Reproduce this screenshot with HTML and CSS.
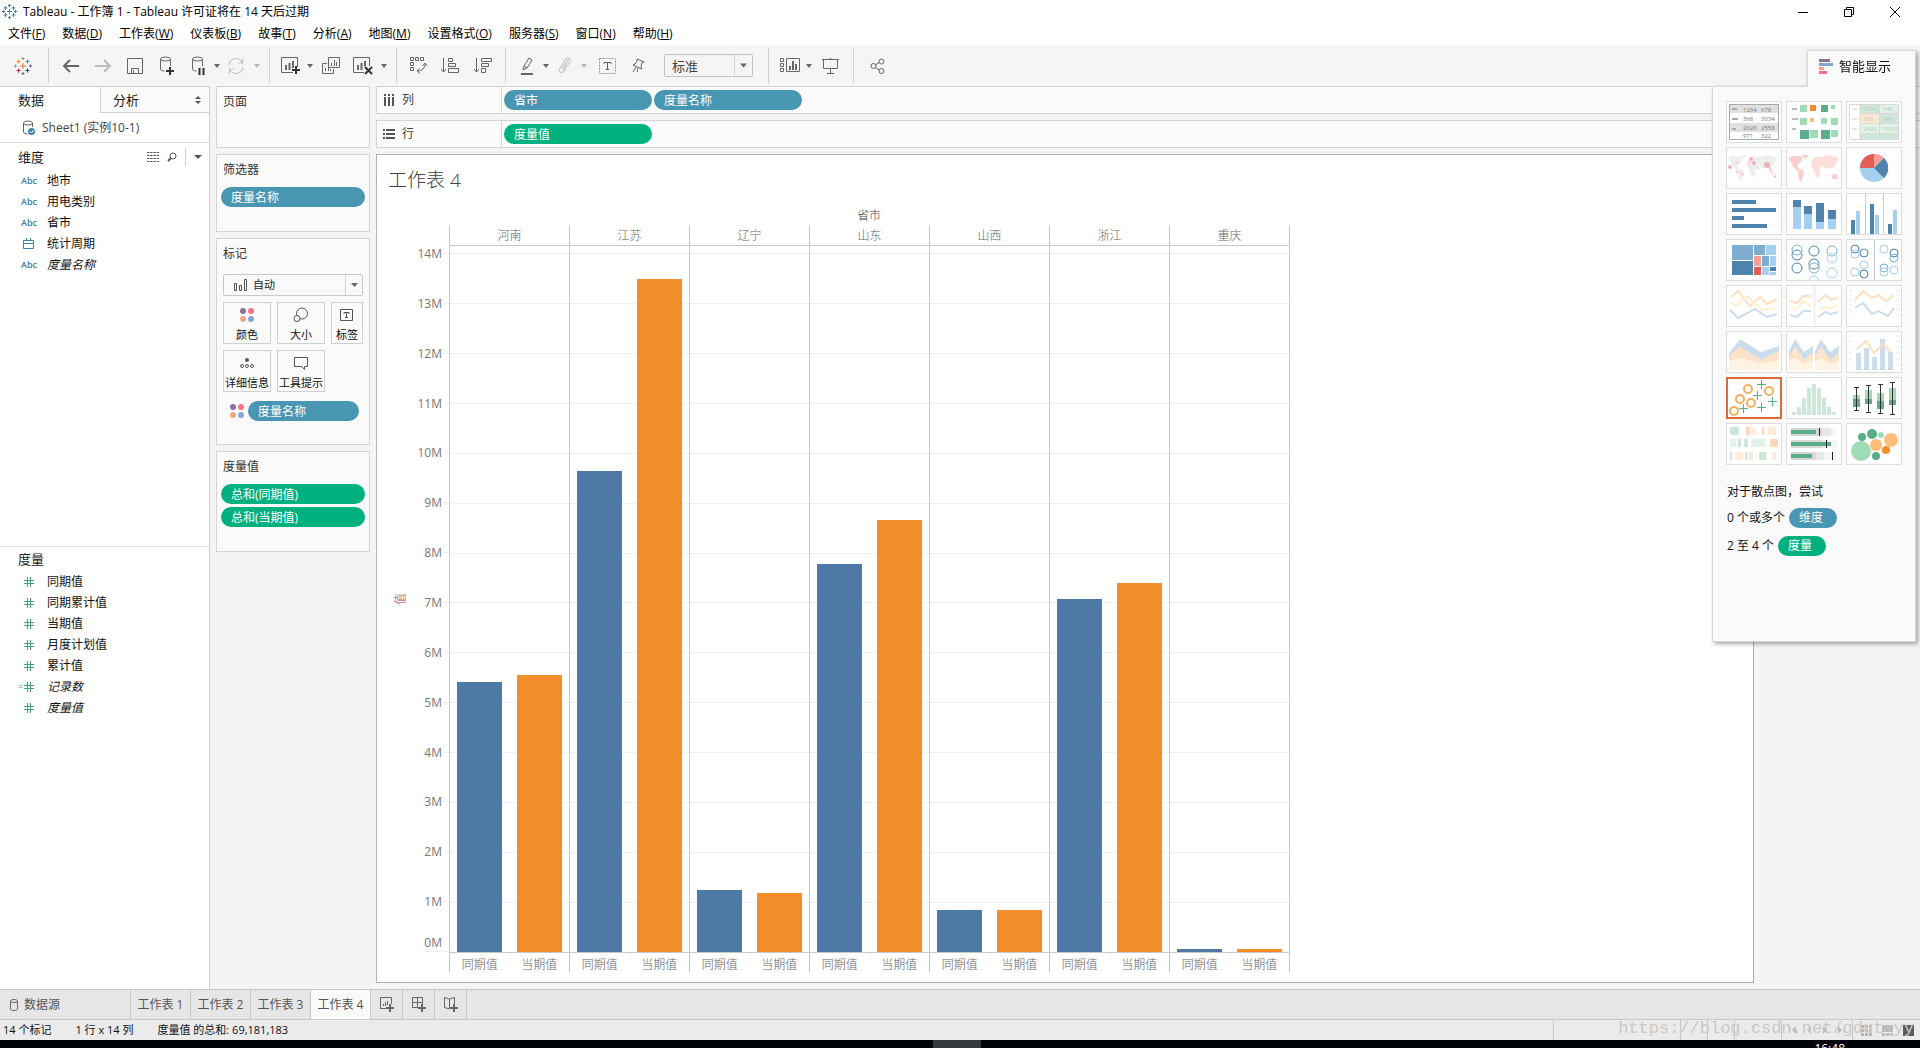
FILE: index.html
```html
<!DOCTYPE html>
<html lang="zh-CN">
<head>
<meta charset="utf-8">
<title>Tableau - 工作簿 1</title>
<link rel="stylesheet" href="styles.css">
</head>
<body>
<svg class="defs" width="0" height="0" aria-hidden="true">
  <symbol id="caret" viewBox="0 0 6 4"><path d="M0 0h6L3 4z" fill="currentColor"/></symbol>
  <symbol id="hash" viewBox="0 0 12 12"><path d="M4.500 1v10M7.500 1v10M1 4.500h10M1 7.500h10" stroke="#3fa57c" fill="none"/></symbol>
  <symbol id="dots" viewBox="0 0 16 16"><circle cx="4" cy="4" r="3" fill="#8a7399"/><circle cx="12" cy="4" r="3" fill="#fa7183"/><circle cx="4" cy="12" r="3" fill="#f3a77e"/><circle cx="12" cy="12" r="3" fill="#86a7cb"/></symbol>
</svg>

<header class="titlebar">
  <svg class="app-logo" width="15" height="15" viewBox="0 0 15 15"><path d="M7.500 5v5M5 7.500h5M3.500 2v4M1.500 4h4M11.500 2v4M9.500 4h4M3.500 9v4M1.500 11h4M11.500 9v4M9.500 11h4M7.500 0v3M6 1.500h3M7.500 12v3M6 13.500h3M1.500 6v3M0 7.500h3M13.500 6v3M12 7.500h3" stroke="#3a87ad" fill="none"/></svg>
  <h1>Tableau - 工作簿 1 - Tableau 许可证将在 14 天后过期</h1>
  <div class="window-buttons">
    <button aria-label="最小化"><svg width="12" height="12"><path d="M1 6.500h10" stroke="#000"/></svg></button>
    <button aria-label="还原"><svg width="12" height="12"><path d="M1.500 3.500h7v7h-7zM3.500 3.500v-2h7v7h-2" stroke="#000" fill="none"/></svg></button>
    <button aria-label="关闭"><svg width="12" height="12"><path d="M1 1l10 10M11 1L1 11" stroke="#000"/></svg></button>
  </div>
</header>

<nav class="menubar">
  <button>文件(<u>F</u>)</button><button>数据(<u>D</u>)</button><button>工作表(<u>W</u>)</button><button>仪表板(<u>B</u>)</button><button>故事(<u>T</u>)</button><button>分析(<u>A</u>)</button><button>地图(<u>M</u>)</button><button>设置格式(<u>O</u>)</button><button>服务器(<u>S</u>)</button><button>窗口(<u>N</u>)</button><button>帮助(<u>H</u>)</button>
</nav>

<div class="toolbar">
  <button class="tool logo" aria-label="开始"><svg width="18" height="18" viewBox="0 0 18 18" fill="none"><path d="M9 6v6M6 9h6" stroke="#e8762c"/><path d="M4.500 2.500v4M2.500 4.500h4" stroke="#eb9129"/><path d="M13.500 2.500v4M11.500 4.500h4" stroke="#59879b"/><path d="M4.500 11.500v4M2.500 13.500h4" stroke="#c72037"/><path d="M13.500 11.500v4M11.500 13.500h4" stroke="#1f447e"/><path d="M9 0v3M7.500 1.500h3" stroke="#7099a6"/><path d="M9 15v3M7.500 16.500h3" stroke="#5b6591"/><path d="M1.500 7.500v3M0 9h3" stroke="#7099a6"/><path d="M16.500 7.500v3M15 9h3" stroke="#5b6591"/></svg></button>
  <span class="sep"></span>
  <button class="tool t32" aria-label="撤消"><svg width="18" height="14" viewBox="0 0 18 14"><path d="M17 7H2M8 1L2 7l6 6" class="thick"/></svg></button>
  <button class="tool t32 off" aria-label="重做"><svg width="18" height="14" viewBox="0 0 18 14"><path d="M1 7h15M10 1l6 6-6 6" class="thick"/></svg></button>
  <button class="tool t32" aria-label="保存"><svg width="16" height="16" viewBox="0 0 16 16"><path d="M.5.5h15v15H.5zM4.500 15.500v-5h7v5M6.500 12v3"/></svg></button>
  <button class="tool t32" aria-label="新建数据源"><svg width="16" height="19" viewBox="0 0 16 19"><path d="M1.500 3v10c0 1 2 2 4 2M11.500 3v7"/><ellipse cx="6.500" cy="3" rx="5" ry="2"/><path d="M11 11v8M7 15h8" class="bold"/></svg></button>
  <button class="tool t30" aria-label="暂停自动更新"><svg width="14" height="19" viewBox="0 0 14 19"><path d="M1.500 3v10c0 1 2 2 4 2M11.500 3v7"/><ellipse cx="6.500" cy="3" rx="5" ry="2"/><path d="M8.500 12v7M12.500 12v7" class="bars2"/></svg></button>
  <button class="tool t8" aria-label="更多"><svg width="6" height="4"><use href="#caret"/></svg></button>
  <button class="tool t30 off" aria-label="运行更新"><svg width="18" height="16" viewBox="0 0 18 16"><path d="M2 7a7 7 0 0 1 13-3M16 9a7 7 0 0 1-13 3M15.500 1v4h-4M2.500 15v-4h4"/></svg></button>
  <button class="tool t12 off" aria-label="更多"><svg width="6" height="4"><use href="#caret"/></svg></button>
  <span class="sep"></span>
  <button class="tool t30" aria-label="新建工作表"><svg width="20" height="18" viewBox="0 0 20 18"><path d="M12 15.500H.5V.5h16V10"/><path d="M5 8v5M8.500 6v7M12 4v7" class="thick"/><path d="M15 9v8M11 13h8" class="bold"/></svg></button>
  <button class="tool t8" aria-label="更多"><svg width="6" height="4"><use href="#caret"/></svg></button>
  <button class="tool t34" aria-label="复制工作表"><svg width="18" height="17" viewBox="0 0 18 17"><path d="M6.500.5h11v10h-11zM5 6.500H.5v10h11V12M9.500 9V6M12.500 9V3M14.500 9V5M3.500 14v-3M6.500 14v-4M8.500 14v-2"/></svg></button>
  <button class="tool t30" aria-label="清除工作表"><svg width="20" height="18" viewBox="0 0 20 18"><path d="M11 15.500H.5V.5h16V9"/><path d="M5 8v5M8.500 6v7M12 4v5" class="thick"/><path d="M12 10l7 7M19 10l-7 7" class="bars2"/></svg></button>
  <button class="tool t12" aria-label="更多"><svg width="6" height="4"><use href="#caret"/></svg></button>
  <span class="sep"></span>
  <button class="tool t30" aria-label="交换行和列"><svg width="17" height="17" viewBox="0 0 17 17"><path d="M.5.5h3v3h-3zM5.500.5h3v3h-3zM10.500.5h3v3h-3zM.5 5.500h3v3h-3zM.5 10.500h3v3h-3zM15 7c0 4-3 7-7 7M12.500 9L15 6l2 3M9.500 11.500L7 14l3 2.500"/></svg></button>
  <button class="tool t34" aria-label="升序排序"><svg width="18" height="16" viewBox="0 0 18 16"><path d="M2.500 0v14M0 11l2.500 3L5 11M7.500.5h4v3h-4zM7.500 5.500h7v3h-7zM7.500 10.500h10v4h-10z"/></svg></button>
  <button class="tool t32" aria-label="降序排序"><svg width="18" height="16" viewBox="0 0 18 16"><path d="M2.500 0v14M0 11l2.500 3L5 11M7.500.5h10v3h-10zM7.500 5.500h7v3h-7zM7.500 10.500h4v4h-4z"/></svg></button>
  <span class="sep"></span>
  <button class="tool t30" aria-label="突出显示"><svg width="14" height="18" viewBox="0 0 14 18"><path d="M3 13l1-4 5-8 3 2-5 8zM4 9l3 2"/><path d="M1 17h12" class="thick"/></svg></button>
  <button class="tool t8" aria-label="更多"><svg width="6" height="4"><use href="#caret"/></svg></button>
  <button class="tool t30 off" aria-label="组成员"><svg width="14" height="17" viewBox="0 0 14 17"><path d="M4 12l5-8c1-2 4-1 3 1L6 14c-2 3-6 1-4.500-2L7 3c2-3 5-2 5 0M9 6l-4 7"/></svg></button>
  <button class="tool t8 off" aria-label="更多"><svg width="6" height="4"><use href="#caret"/></svg></button>
  <button class="tool t38" aria-label="显示标记标签"><svg width="17" height="16" viewBox="0 0 17 16"><path d="M.5.5h16v15H.5z" stroke-dasharray="2 1" stroke="#999"/><path d="M5 6V4.500h7V6M8.500 4.500v7M7 11.500h3"/></svg></button>
  <button class="tool t24" aria-label="固定轴"><svg width="14" height="16" viewBox="0 0 14 16"><path d="M6 1l7 3-2 1-1 4 1 2-9-4 2-1 2-3zM5 9l-3 5M7 10l-1 4"/></svg></button>
  <select class="fit" aria-label="适合"><option>标准</option></select>
  <span class="sep"></span>
  <button class="tool t30" aria-label="显示/隐藏卡"><svg width="20" height="15" viewBox="0 0 20 15"><path d="M.5.5h3v3h-3zM.5 5.500h3v3h-3zM.5 10.500h3v3h-3zM6.500.5h13v13h-13z"/><path d="M10 8v4M13 3v9M16 6v6" class="thick"/></svg></button>
  <button class="tool t8" aria-label="更多"><svg width="6" height="4"><use href="#caret"/></svg></button>
  <button class="tool t34" aria-label="演示模式"><svg width="17" height="16" viewBox="0 0 17 16"><path d="M0 1.500h17M1.500 2v8.500h14V2M8.500 0v2M8.500 10.500v5M5 15.500h7"/></svg></button>
  <span class="sep"></span>
  <button class="tool t34" aria-label="共享"><svg width="15" height="16" viewBox="0 0 15 16"><path d="M5.500 7L9 4.500M5.500 9.500l4 2.500"/><circle cx="3.500" cy="8" r="2.500"/><circle cx="11.500" cy="3.500" r="2.500"/><circle cx="11.500" cy="13" r="2.500"/></svg></button>
</div>

<main class="workspace">
  <aside class="data-pane">
    <div class="pane-tabs">
      <button class="on">数据</button>
      <button>分析<svg width="6" height="8" viewBox="0 0 6 8"><path d="M0 3l3-3 3 3zM0 5h6L3 8z" fill="#555"/></svg></button>
    </div>
    <div class="source">
      <svg width="14" height="16" viewBox="0 0 14 16"><g fill="none" stroke="#666"><path d="M1.500 3v9c0 1 2 2 4 2M10.500 3v4"/><ellipse cx="6" cy="3" rx="4.500" ry="2"/></g><circle cx="9.500" cy="11.500" r="3.500" fill="#3a87ad"/><path d="M8 11.500l1.500 1.500 2-3" stroke="#fff" fill="none"/></svg>
      Sheet1 (实例10-1)
    </div>
    <section class="fields dims">
      <header><h2>维度</h2>
        <svg width="12" height="10" viewBox="0 0 12 10"><path d="M0 .5h12M0 3.500h12M0 6.500h12M0 9.500h12" stroke="#555" stroke-dasharray="2.400 .8"/></svg>
        <svg width="10" height="10" viewBox="0 0 10 10"><circle cx="6" cy="4" r="3" fill="none" stroke="#555"/><path d="M4 6L1 9" stroke="#555" stroke-width="2"/></svg>
        <i></i>
        <svg width="8" height="4" viewBox="0 0 8 4"><path d="M0 0h8L4 4z" fill="#555"/></svg>
      </header>
      <ul>
        <li><b>Abc</b>地市</li>
        <li><b>Abc</b>用电类别</li>
        <li><b>Abc</b>省市</li>
        <li><b><svg width="11" height="11" viewBox="0 0 11 11"><path d="M.5 2.500h10v8H.5zM.5 5.500h10M3.500 0v3M7.500 0v3" fill="none" stroke="#3a87ad"/></svg></b>统计周期</li>
        <li><b>Abc</b><em>度量名称</em></li>
      </ul>
    </section>
    <section class="fields measures">
      <header><h2>度量</h2></header>
      <ul>
        <li><b><svg width="12" height="12"><use href="#hash"/></svg></b>同期值</li>
        <li><b><svg width="12" height="12"><use href="#hash"/></svg></b>同期累计值</li>
        <li><b><svg width="12" height="12"><use href="#hash"/></svg></b>当期值</li>
        <li><b><svg width="12" height="12"><use href="#hash"/></svg></b>月度计划值</li>
        <li><b><svg width="12" height="12"><use href="#hash"/></svg></b>累计值</li>
        <li class="calc"><b><svg width="12" height="12"><use href="#hash"/></svg></b><em>记录数</em></li>
        <li><b><svg width="12" height="12"><use href="#hash"/></svg></b><em>度量值</em></li>
      </ul>
    </section>
  </aside>

  <div class="cards">
    <section class="card pages"><h2>页面</h2></section>
    <section class="card filters"><h2>筛选器</h2><button class="pill">度量名称</button></section>
    <section class="card marks">
      <h2>标记</h2>
      <label class="mark-type"><svg width="14" height="12" viewBox="0 0 14 12"><path d="M.5 4.500h2v7h-2zM5.500 6.500h2v5h-2zM10.500.5h2v11h-2z" fill="none" stroke="#555"/></svg>
        <select aria-label="标记类型"><option>自动</option></select></label>
      <div class="mark-buttons">
        <button><svg width="16" height="16"><use href="#dots"/></svg>颜色</button>
        <button><svg width="16" height="16" viewBox="0 0 16 16" fill="none" stroke="#555"><circle cx="9" cy="6.500" r="5.500"/><circle cx="4" cy="11.500" r="3" fill="#fafafa"/></svg>大小</button>
        <button><svg width="16" height="16" viewBox="0 0 16 16" fill="none" stroke="#555"><path d="M1.500 2.500h12v11h-12zM5 7V5.500h5V7M7.500 5.500v5M6 10.500h3"/></svg>标签</button>
        <button><svg width="16" height="16" viewBox="0 0 16 16" fill="none" stroke="#555"><circle cx="8" cy="5" r="2" fill="#555" stroke="none"/><circle cx="3" cy="11" r="1.500"/><circle cx="8" cy="11" r="1.500"/><circle cx="13" cy="11" r="1.500"/></svg>详细信息</button>
        <button><svg width="16" height="16" viewBox="0 0 16 16" fill="none" stroke="#555"><path d="M1.500 2.500h13v9h-3v3l-3-3h-7z"/></svg>工具提示</button>
      </div>
      <div class="mark-pill"><svg width="16" height="16"><use href="#dots"/></svg><button class="pill">度量名称</button></div>
    </section>
    <section class="card values"><h2>度量值</h2><button class="pill green">总和(同期值)</button><button class="pill green">总和(当期值)</button></section>
  </div>

  <div class="sheet">
    <div class="shelf"><span class="shelf-name"><svg width="12" height="12" viewBox="0 0 12 12"><path d="M2 0v2M6 0v2M10 0v2M2 3v9M6 3v9M10 3v9" stroke="#555" stroke-width="2"/></svg>列</span><button class="pill">省市</button><button class="pill">度量名称</button></div>
    <div class="shelf"><span class="shelf-name"><svg width="12" height="12" viewBox="0 0 12 12"><path d="M0 2h2M0 6h2M0 10h2M3 2h9M3 6h9M3 10h9" stroke="#555" stroke-width="2"/></svg>行</span><button class="pill green">度量值</button></div>
    <div class="view">
      <h2>工作表 4</h2>
      <p class="col-field">省市</p>
      <div class="chart">
        <div class="axis"><span class="axis-title">值</span><div class="ticks" id="ticks"></div></div>
        <div class="panes" id="panes"></div>
      </div>
    </div>
  </div>
</main>

<aside class="showme">
  <button class="showme-tab"><svg width="14" height="15" viewBox="0 0 14 15"><path d="M0 0h11v3H0z" fill="#8a7399"/><path d="M0 4h14v3H0z" fill="#86a7cb"/><path d="M0 8h5v3H0z" fill="#f3a77e"/><path d="M0 12h8v3H0z" fill="#fa7183"/></svg>智能显示</button>
  <div class="showme-body">
    <div class="tiles">
      <button aria-label="文本表"><svg viewBox="1 1 54 40"><path d="M3 3h50v9H3zM3 22h50v9H3z" fill="#e0e0e0"/><path d="M3.500 3.500h49v35h-49z" fill="none" stroke="#aaa"/><path d="M6 8h5M6 18h6M6 28h4" stroke="#aaa" stroke-width="2"/><g class="num"><text x="17" y="11">1234</text><text x="35" y="11">678</text><text x="17" y="20">368</text><text x="35" y="20">3034</text><text x="17" y="29">2620</text><text x="35" y="29">2558</text><text x="17" y="37">971</text><text x="35" y="37">322</text></g></svg></button>
      <button aria-label="热图"><svg viewBox="1 1 54 40"><path d="M6 8h5M6 18h6M6 28h4" stroke="#bbb" stroke-width="2"/><path d="M14 4h7v7h-7zM45 4h4v4h-4zM14 17h7v7h-7zM35 17h6v6h-6zM45 17h7v7h-7zM24 29h8v8h-8zM45 29h7v7h-7z" fill="#9fdcb6"/><path d="M35 4h7v7h-7zM14 29h9v9h-9zM35 29h9v9h-9z" fill="#59ad89"/><path d="M24 4h6v6h-6z" fill="#f58e29"/><path d="M24 17h4v4h-4z" fill="#ffbd7a"/></svg></button>
      <button aria-label="突出显示表"><svg viewBox="1 1 54 40"><path d="M14 3h20v9H14zM34 13h19v9H34zM14 32h20v6H14zM34 32h19v6H34z" fill="#cde7db"/><path d="M34 3h19v9H34zM14 22h20v9H14zM34 22h19v9H34z" fill="#e1f3e8"/><path d="M14 13h20v9H14z" fill="#fee8d2"/><path d="M3.500 3.500h49v35h-49zM14 3v35M33.500 3v35M14 12.500h39M14 22.500h39M14 32h39" fill="none" stroke="#d8d8d8"/><path d="M6 8h5M6 18h5M6 28h5" stroke="#e6e6e6" stroke-width="2"/><g class="num faint"><text x="17" y="10">1234</text><text x="37" y="10">546</text><text x="17" y="20">368</text><text x="37" y="20">340</text><text x="17" y="30">2620</text><text x="36" y="30">51890</text></g></svg></button>

      <button aria-label="符号地图"><svg viewBox="1 1 54 40"><path d="M2 11l4-2 7 0 4 1-2 5-4 3 2 4 4 1 1 4-3 8-2-2-1-9-4-3-3-6zM23 13l3-4 6 1 10-2 9 3-3 6-4 5-3-2-4 2-3-4-4 3-1 6-3 4-3-8-2-4zM45 26l5-1 1 4-5 1zM15 8h5l-2 4z" fill="#eee"/><g fill="#e9b3b8"><circle cx="4" cy="20" r="2"/><circle cx="41" cy="18" r="3"/><circle cx="25" cy="12" r="2"/><circle cx="32" cy="21" r="1"/><circle cx="28" cy="16" r="2"/><circle cx="11" cy="25" r="1"/><circle cx="44" cy="21" r="1"/><circle cx="49" cy="30" r="1"/></g><g fill="#fbd9d8"><circle cx="11" cy="16" r="2"/><circle cx="23" cy="16" r="2"/><circle cx="16" cy="27" r="2"/><circle cx="45" cy="24" r="2"/></g></svg></button>
      <button aria-label="地图"><svg viewBox="1 1 54 40"><path d="M2 11l4-2 7 0 4 1-2 5-4 3 2 4 4 1 1 4-3 8-2-2-1-9-4-3-3-6zM46 28l5-1 1 5-6 0zM15 8h8l-3 4z" fill="#f9cfcd"/><path d="M26 13l3-3 5 0 9-2 10 3-3 6-4 5-3-2-4 2-3-4-2 4 0 6-3 4-3-8-3-4z" fill="#fedddd"/></svg></button>
      <button aria-label="饼图"><svg viewBox="1 1 54 40"><circle cx="28" cy="21" r="14" fill="#a4cfef"/><path d="M28 21V7a14 14 0 0 0-14 14z" fill="#e15d55"/><path d="M28 21V7a14 14 0 0 1 10 4z" fill="#ff9d97"/><path d="M28 21L38 11a14 14 0 0 1 0 20z" fill="#4e83ad"/></svg></button>

      <button aria-label="水平条"><svg viewBox="1 1 54 40"><path d="M6 7h24v4H6zM6 15h44v4H6zM6 23h12v4H6zM6 31h35v4H6z" fill="#4e83ad"/></svg></button>
      <button aria-label="堆叠条"><svg viewBox="1 1 54 40"><path d="M7 7h8v7H7zM18 13h8v8h-8zM30 10h8v19h-8zM42 17h8v9h-8z" fill="#4e83ad"/><path d="M7 14h8v22H7zM18 21h8v15h-8zM30 29h8v7h-8zM42 26h8v10h-8z" fill="#a4cfef"/></svg></button>
      <button aria-label="并排条"><svg viewBox="1 1 54 40"><path d="M19.500 0v42M37.500 0v42" stroke="#ccc"/><path d="M5 27h4v14H5zM24 11h4v30h-4zM42 31h4v10h-4z" fill="#4e83ad"/><path d="M10 18h4v23h-4zM29 22h4v19h-4zM47 17h4v24h-4z" fill="#a4cfef"/></svg></button>

      <button aria-label="树状图"><svg viewBox="1 1 54 40"><path d="M6 6h21v15H6zM28 6h11v10H28zM36 17h7v10h-7z" fill="#7eadd2"/><path d="M6 22h21v14H6zM44 28h6v4h-6z" fill="#4e83ad"/><path d="M40 6h10v10H40zM44 17h6v10h-6zM36 28h7v8h-7zM44 33h6v3h-6z" fill="#a4cfef"/><path d="M28 17h7v10h-7z" fill="#ff9d97"/><path d="M28 28h7v8h-7z" fill="#e15d55"/></svg></button>
      <button aria-label="圆视图"><svg viewBox="1 1 54 40" fill="none"><g stroke="#4e83ad"><circle cx="11" cy="16" r="5"/><circle cx="11" cy="29" r="5"/><circle cx="28" cy="12" r="5"/><circle cx="28" cy="25" r="5"/></g><g stroke="#7eadd2"><circle cx="11" cy="11" r="5"/><circle cx="46" cy="12" r="5"/><circle cx="28" cy="29" r="5"/></g><g stroke="#a4cfef"><circle cx="46" cy="19" r="5"/><circle cx="46" cy="34" r="5"/><circle cx="28" cy="42" r="5"/></g></svg></button>
      <button aria-label="并排圆"><svg viewBox="1 1 54 40" fill="none"><path d="M28.500 0v42" stroke="#ccc"/><g stroke="#4e83ad"><circle cx="9" cy="10" r="4"/><circle cx="18" cy="14" r="4"/><circle cx="18" cy="35" r="4"/><circle cx="48" cy="14" r="4"/></g><g stroke="#7eadd2"><circle cx="48" cy="19" r="4"/><circle cx="38" cy="29" r="4"/></g><g stroke="#a4cfef"><circle cx="9" cy="15" r="4"/><circle cx="18" cy="26" r="4"/><circle cx="9" cy="33" r="4"/><circle cx="38" cy="10" r="4"/><circle cx="38" cy="33" r="4"/><circle cx="48" cy="31" r="4"/></g></svg></button>

      <button aria-label="线（连续）"><svg class="faded-lines" viewBox="1 1 54 40" fill="none"><path d="M5 12l7-6 12 15 10-9 7 7 10-5" stroke="#fedfc0"/><path d="M5 18l7 2 9-9 14 14 16-2" stroke="#fff0d0"/><path d="M4 25l8 8 17-9 12 8 10-3" stroke="#cddcea"/></svg></button>
      <button aria-label="线（离散）"><svg class="faded-lines" viewBox="1 1 54 40" fill="none"><path d="M28.500 0v42" stroke="#eee"/><path d="M4 16l7 2 6-7h8M32 17l7-7 6 5 7-3" stroke="#fedfc0"/><path d="M4 22l7 2 6-8 8 6M32 25l7-3 6 1 7-3" stroke="#fff0d0"/><path d="M4 30l7 2 6-6h8M32 32l7-5 6 2 7-2" stroke="#cddcea"/></svg></button>
      <button aria-label="双线"><svg viewBox="1 1 54 40" fill="none"><path d="M3 5h3M3 10h3M3 15h3M3 20h3M3 25h3M3 30h3M50 5h4M50 10h4M50 15h4M50 20h4M50 25h4M50 30h4" stroke="#e8e8e8"/><g class="faded-lines"><path d="M9 15l8-9 9 7 6-3 8 6 8-6" stroke="#fedfc0"/><path d="M9 23l8-5 9 11 6-3 10 5 6-8" stroke="#cddcea"/></g></svg></button>

      <button aria-label="面积图（连续）"><svg viewBox="1 1 54 40"><path d="M3 22L14 8l21 13 18-6v7L35 29 14 16 3 26z" fill="#cddcea"/><path d="M3 25l11-9 21 13 18-9v11L35 33 14 27 3 31z" fill="#fee3c9"/><path d="M3 30l11-3 21 6 18-4v10H3z" fill="#fff3e3"/></svg></button>
      <button aria-label="面积图（离散）"><svg viewBox="1 1 54 40"><path d="M3 20L9 8l9 13 9-6v7l-9 7-9-13-6 10zM29 20l6-12 9 13 9-6v7l-9 7-9-13-6 10z" fill="#cddcea"/><path d="M3 26l6-10 9 13 9-7v9l-9 2-9-6-6 4zM29 26l6-10 9 13 9-7v9l-9 2-9-6-6 4z" fill="#fee3c9"/><path d="M3 31l6-4 9 6 9-4v10H3zM29 31l6-4 9 6 9-4v10H29z" fill="#fff3e3"/></svg></button>
      <button aria-label="双组合"><svg viewBox="1 1 54 40"><path d="M3 5h3M3 10h3M3 16h3M3 22h3M3 28h3M3 34h3M50 5h4M50 10h4M50 16h4M50 22h4M50 28h4M50 34h4" stroke="#e8e8e8"/><path d="M10 22h5v17h-5zM18 17h5v22h-5zM26 26h5v13h-5zM34 8h5v31h-5zM42 21h5v18h-5z" fill="#cddcea"/><path class="faded-lines" d="M11 18l9-8 8 12 9-9 9 9" fill="none" stroke="#fedfc0"/></svg></button>

      <button class="picked" aria-label="散点图"><svg viewBox="1 1 54 40" fill="none"><g stroke="#f6ae5d" class="ring"><circle cx="22" cy="12" r="4"/><circle cx="43" cy="14" r="4"/><circle cx="14" cy="22" r="4"/><circle cx="25" cy="26" r="4"/><circle cx="8" cy="34" r="4"/></g><path d="M35.500 3v9M31 7.500h9M31.500 14v9M27 18.500h9M46.500 20v9M42 24.500h9M17.500 27v9M13 31.500h9M35.500 26v9M31 30.500h9" stroke="#59ad89"/></svg></button>
      <button aria-label="直方图"><svg viewBox="1 1 54 40"><path d="M6 35h4v3H6zM11 30h4v8h-4zM16 21h4v17h-4zM21 11h4v27h-4zM26 7h4v31h-4zM31 11h4v27h-4zM36 21h4v17h-4zM41 30h4v8h-4zM46 35h4v3h-4z" fill="#cde7db"/></svg></button>
      <button aria-label="盒须图"><svg viewBox="1 1 54 40"><path d="M7 18h7v4H7zM19 13h7v9h-7zM31 16h7v8h-7zM43 11h7v12h-7z" fill="#9fdcb6"/><path d="M7 22h7v8H7zM19 22h7v5h-7zM31 24h7v8h-7zM43 23h7v5h-7z" fill="#59ad89"/><path d="M10.500 10v23M8 10.500h5M8 33.500h5M22.500 8v27M20 8.500h5M20 35.500h5M34.500 7v29M32 7.500h5M32 36.500h5M46.500 5v33M44 5.500h5M44 37.500h5" stroke="#333"/></svg></button>

      <button aria-label="甘特图"><svg viewBox="1 1 54 40"><path d="M4 4h9v8H4zM12 16h3v8h-3zM18 16h4v8h-4zM4 29h2v8H4zM33 29h7v8h-7z" fill="#cde7db"/><path d="M4 16h6v8H4zM25 16h14v8H25zM23 29h4v8h-4z" fill="#e1f3e8"/><path d="M20 4h4v8h-4zM36 4h2v8h-2zM44 16h8v8h-8zM19 29h2v8h-2z" fill="#fbd8b9"/><path d="M25 4h4v8h-4zM42 4h8v8h-8zM9 29h8v8H9zM46 29h4v8h-4z" fill="#feebd8"/></svg></button>
      <button aria-label="靶心图"><svg viewBox="1 1 54 40"><path d="M5 5h46v8H5zM5 17h46v8H5zM5 29h46v8H5z" fill="#f5f5f5"/><path d="M5 5h40v8H5zM5 17h37v8H5zM5 29h33v8H5z" fill="#e8e8e8"/><path d="M5 5h31v8H5zM5 17h31v8H5zM5 29h25v8H5z" fill="#d8d8d8"/><path d="M5 7h25v4H5zM5 19h40v4H5zM5 31h21v4H5z" fill="#59ad89"/><path d="M33.500 5v8M40.500 17v8M46.500 29v8" stroke="#222"/></svg></button>
      <button aria-label="填充气泡图"><svg viewBox="1 1 54 40"><g fill="#9fdcb6"><circle cx="15" cy="28" r="10"/><circle cx="35" cy="12" r="3"/></g><g fill="#59ad89"><circle cx="16" cy="14" r="4"/><circle cx="26" cy="11" r="5"/><circle cx="30" cy="33" r="4"/></g><g fill="#ffbd7a"><circle cx="30" cy="22" r="6"/><circle cx="45" cy="17" r="7"/></g><circle cx="40" cy="27" r="4" fill="#f58e29"/></svg></button>
    </div>
    <p class="hint">对于散点图，尝试</p>
    <p>0 个或多个 <span class="pill">维度</span></p>
    <p>2 至 4 个 <span class="pill green">度量</span></p>
  </div>
</aside>

<nav class="sheet-tabs">
  <button class="data-source"><svg width="8" height="12" viewBox="0 0 8 12"><path d="M.5 2v8c0 2 7 2 7 0V2M.5 2c0-2 7-2 7 0s-7 2-7 0z" fill="none" stroke="#666"/></svg>数据源</button>
  <button>工作表 1</button><button>工作表 2</button><button>工作表 3</button><button class="on">工作表 4</button>
  <button class="new" aria-label="新建工作表"><svg width="16" height="16" viewBox="0 0 16 16"><path d="M8 11.500H1.500V.5h11V7M4.500 9V7M6.500 9V5M8.500 8V4" fill="none" stroke="#666"/><path d="M11 7v8M7 11h8" stroke="#666" stroke-width="2"/></svg></button>
  <button class="new" aria-label="新建仪表板"><svg width="16" height="16" viewBox="0 0 16 16"><path d="M8 10.500H1.500V.5h10V7M1.500 5.500h10M6.500.5v10" fill="none" stroke="#666"/><path d="M11 7v8M7 11h8" stroke="#666" stroke-width="2"/></svg></button>
  <button class="new" aria-label="新建故事"><svg width="16" height="16" viewBox="0 0 16 16"><path d="M7 12l-5.500-1.500V.5L6.500 2l5-1.500V7M6.500 2v9" fill="none" stroke="#666"/><path d="M11 7v8M7 11h8" stroke="#666" stroke-width="2"/></svg></button>
</nav>

<footer class="status">
  <span>14 个标记</span><span>1 行 x 14 列</span><span>度量值 的总和: 69,181,183</span>
  <div class="status-right">
    <i class="wide"></i><i></i><i></i><i class="mid"></i>
    <div class="nav-buttons">
      <button aria-label="第一个"><svg width="8" height="8"><path d="M1 1v6" stroke="#bbb"/><path d="M7 0v8L3 4z" fill="#bbb"/></svg></button>
      <button aria-label="上一个"><svg width="8" height="8"><path d="M6 0v8L2 4z" fill="#bbb"/></svg></button>
      <button aria-label="下一个"><svg width="8" height="8"><path d="M2 0v8l4-4z" fill="#bbb"/></svg></button>
      <button aria-label="最后一个"><svg width="8" height="8"><path d="M7 1v6" stroke="#bbb"/><path d="M1 0v8l4-4z" fill="#bbb"/></svg></button>
    </div>
    <div class="view-buttons">
      <button aria-label="工作表排序"><svg width="11" height="11"><path d="M0 0h3v3H0zM4 0h3v3H4zM8 0h3v3H8zM0 4h3v3H0zM4 4h3v3H4zM8 4h3v3H8zM0 8h3v3H0zM4 8h3v3H4zM8 8h3v3H8z" fill="#b5b5b5"/></svg></button>
      <button aria-label="缩略图"><svg width="11" height="11"><path d="M0 0h11v7H0zM0 8h3v3H0zM4 8h3v3H4zM8 8h3v3H8z" fill="#bbb"/></svg></button>
      <button aria-label="标签"><svg width="11" height="11"><path d="M0 0h11v11H0z" fill="#5a5a5a"/></svg></button>
    </div>
  </div>
  <span class="watermark">https://blog.csdn.net/gdut_yy</span>
</footer>
<div class="taskbar"><span class="running"></span><time>16:48</time></div>
<script src="chart.js"></script>
</body>
</html>
```
FILE: styles.css
```css
* { box-sizing: border-box; }

body {
  margin: 0;
  height: 100vh;
  display: flex;
  flex-direction: column;
  overflow: hidden;
  position: relative;
  background: #f4f4f4;
  color: #222;
  font: 12px/18px "Open Sans", "Noto Sans CJK SC", sans-serif;
}

h1, h2, p, ul { margin: 0; padding: 0; font-weight: 400; }
ul { list-style: none; }
button, select {
  font: inherit;
  color: inherit;
  background: none;
  border: 0;
  margin: 0;
  padding: 0;
  border-radius: 0;
  text-align: left;
  white-space: nowrap;
}
svg { display: block; flex: none; }
.defs { position: absolute; }

/* title and menu */
.titlebar { display: flex; align-items: center; height: 23px; flex: none; background: #fff; padding: 0 2px; color: #000; }
.titlebar h1 { font-size: 12px; line-height: 23px; margin-left: 6px; flex: 1; }
.window-buttons { display: flex; }
.window-buttons button { width: 46px; height: 21px; display: flex; align-items: center; justify-content: center; }
.menubar { display: flex; gap: 17px; height: 22px; flex: none; background: #fff; padding-left: 8px; color: #000; }
.menubar button { line-height: 22px; }

/* toolbar */
.toolbar { display: flex; align-items: center; height: 41px; flex: none; padding-left: 4px; background: #f5f5f5; }
.tool { height: 30px; display: flex; align-items: center; justify-content: center; color: #666; }
.tool svg { fill: none; stroke: #666; }
.tool use { stroke: none; }
.tool.off { color: #bbb; }
.tool.off svg { stroke: #bbb; }
.logo { width: 38px; }
.t8 { width: 8px; }
.t12 { width: 12px; }
.t24 { width: 24px; }
.t30 { width: 30px; }
.t32 { width: 32px; }
.t34 { width: 34px; }
.t38 { width: 38px; }
.thick { stroke-width: 2; }
.bold { stroke: #333; stroke-width: 2; }
.bars2 { stroke: #333; stroke-width: 2; }
.ring { stroke-width: 2; }
.sep { width: 1px; height: 35px; margin: 0 6px; background: #d0d0d0; }
select {
  appearance: none;
  background: url("data:image/svg+xml,%3Csvg xmlns='http://www.w3.org/2000/svg' width='25' height='30'%3E%3Cpath d='M.5 0v30' stroke='%23d4d4d4'/%3E%3Cpath d='M6 13h7l-3.500 4z' fill='%23666'/%3E%3C/svg%3E") no-repeat right center;
}
.fit { width: 89px; height: 23px; margin: 0 9px 0 14px; padding-left: 7px; border: 1px solid #c4c4c4; border-radius: 2px; font-size: 13px; color: #444; background-position: 69px center; }

/* workspace */
.workspace { flex: 1; min-height: 0; display: flex; }
.data-pane { width: 210px; flex: none; display: flex; flex-direction: column; background: #fff; border: 1px solid #d0d0d0; border-width: 1px 1px 0 0; }
.pane-tabs { display: grid; grid-template-columns: 100px 1fr; height: 26px; flex: none; font-size: 13px; }
.pane-tabs button { padding-left: 18px; line-height: 24px; }
.pane-tabs button + button { display: flex; align-items: center; justify-content: space-between; padding: 0 8px 0 12px; background: #fafafa; border: 1px solid #d0d0d0; border-width: 0 0 1px 1px; }
.source { display: flex; align-items: center; gap: 6px; height: 30px; flex: none; padding-left: 22px; color: #444; border-bottom: 1px solid #dedede; }
.dims { flex: 21; border-bottom: 1px solid #dedede; }
.measures { flex: 23; }
.fields header { display: flex; align-items: center; height: 27px; padding: 0 7px 0 18px; }
.fields.measures header { height: 24px; }
.fields h2 { font-size: 13px; flex: 1; }
.fields header svg + svg { margin-left: 8px; }
.fields header i { width: 1px; height: 18px; margin: 0 8px; background: #d0d0d0; }
.fields header i + svg { margin-left: 0; }
.fields li { display: flex; align-items: center; height: 21px; padding-left: 21px; color: #111; position: relative; }
.fields b { width: 26px; font: 600 9px/21px "Open Sans", sans-serif; color: #3a7d98; }
.fields b svg { margin-left: 2px; }
.calc::before { content: "="; position: absolute; left: 18px; color: #3fa57c; font-size: 9px; }
em { font-style: italic; }

/* cards */
.cards { width: 154px; margin: 0 6px; flex: none; display: flex; flex-direction: column; gap: 6px; }
.card { background: #fafafa; border: 1px solid #d4d4d4; padding: 0 4px; }
.card h2 { font-size: 12px; line-height: 20px; padding: 5px 0 0 2px; margin-bottom: 7px; color: #333; }
.pages { height: 62px; }
.filters { height: 78px; }
.marks { height: 207px; padding: 0 6px; }
.marks h2 { padding-left: 0; margin-bottom: 10px; }
.values { height: 101px; }
.pill { display: block; width: 148px; height: 20px; line-height: 19px; padding: 0 10px; border-radius: 10px; background: #4996b2; color: #fff; }
.pill.green { background: #00b180; }
.filters .pill, .values .pill { width: 144px; }
.values .pill + .pill { margin-top: 3px; }
.mark-type { display: flex; align-items: center; height: 22px; width: 140px; border: 1px solid #c8c8c8; border-radius: 2px; padding-left: 10px; font-size: 11px; }
.mark-type select { flex: 1; align-self: stretch; padding-left: 5px; background-position: right -8px center; }
.mark-buttons { display: flex; flex-wrap: wrap; gap: 6px; margin-top: 6px; width: 142px; }
.mark-buttons button { width: 48px; height: 42px; display: flex; flex-direction: column; align-items: center; justify-content: space-between; padding-top: 4px; font-size: 11px; line-height: 17px; color: #111; border: 1px solid #d0d0d0; }
.mark-buttons button:nth-child(3) { width: 32px; }
.mark-pill { display: flex; align-items: center; gap: 3px; margin-top: 9px; padding-left: 6px; }
.mark-pill .pill { width: 111px; }

/* shelves and view */
.sheet { flex: 1; min-width: 0; display: flex; flex-direction: column; gap: 6px; padding-bottom: 6px; }
.shelf { display: flex; gap: 2px; height: 28px; flex: none; align-items: center; background: #fafafa; border: 1px solid #d4d4d4; border-right: 0; }
.shelf-name { display: flex; gap: 7px; align-items: center; align-self: stretch; width: 125px; padding-left: 6px; border-right: 1px solid #d4d4d4; color: #444; }
.view { flex: 1; margin-right: 166px; display: flex; flex-direction: column; background: #fff; border: 1px solid #b0b0b0; padding-bottom: 10px; }
.view h2 { font-size: 19px; line-height: 30px; padding: 10px 0 10px 11px; font-weight: 300; color: #444; }
.col-field { width: 840px; height: 20px; margin-left: 72px; text-align: center; line-height: 22px; font-weight: 300; color: #444; }
.chart { flex: 1; display: flex; font-weight: 300; color: #666; }
.axis { width: 72px; display: flex; padding: 21px 0 20px; }
.axis-title { width: 48px; align-self: center; text-align: center; color: #b04a42; transform: rotate(-90deg); }
.ticks { width: 24px; margin-top: 7px; display: flex; flex-direction: column; border-bottom: 1px solid #eee; font-weight: 400; color: #777; }
.tick { flex: 1; display: flex; flex-direction: column; justify-content: space-between; align-items: flex-end; padding-right: 7px; position: relative; }
.tick::after { content: ""; position: absolute; top: 0; right: 0; width: 5px; height: 1px; background: #eee; }
.tick span { margin: -8px 0 -1px; }
.panes { display: flex; border-right: 1px solid #c8c8c8; }
.pane { width: 120px; display: flex; flex-direction: column; border-left: 1px solid #c8c8c8; }
.pane-name { height: 21px; line-height: 22px; text-align: center; border-bottom: 1px solid #c8c8c8; }
.plot { flex: 1; display: grid; padding-top: 7px; }
.lines, .bars { grid-area: 1 / 1; display: flex; }
.lines { flex-direction: column; }
.lines i { flex: 1; border-top: 1px solid #f0f0f0; }
.bars { align-items: flex-end; gap: 15px; padding: 0 7px; }
.bar { flex: 1; background: #4e79a7; }
.bar + .bar { background: #f28e2b; }
.bar-names { display: grid; grid-template-columns: 1fr 1fr; height: 20px; flex: none; border-top: 1px solid #c8c8c8; line-height: 24px; text-align: center; background: linear-gradient(#eee, #eee) center top / 1px 4px no-repeat; }

/* show me */
.showme { position: absolute; top: 50px; right: 4px; width: 204px; display: flex; flex-direction: column; filter: drop-shadow(2px 2px 2px rgba(0, 0, 0, .35)); }
.showme-tab { align-self: flex-end; display: flex; align-items: center; gap: 6px; width: 109px; height: 37px; margin-bottom: -1px; padding: 0 0 6px 11px; background: #fafafa; border: 1px solid #d8d8d8; border-bottom: 0; font-size: 13px; color: #111; position: relative; z-index: 1; }
.showme-body { background: #fafafa; border: 1px solid #d8d8d8; padding: 14px 13px 81px; }
.tiles { display: grid; grid-template-columns: repeat(3, 56px); gap: 4px; margin-bottom: 15px; }
.tiles button { height: 42px; background: #fff; border: 1px solid #ddd; }
.tiles .picked { outline: 1px solid #de6b35; outline-offset: -2px; border-color: #de6b35; }
.tiles svg { width: 54px; height: 40px; }
.faded-lines { stroke-width: 2; }
.num { font: 6px "Open Sans", sans-serif; fill: #777; }
.faint { fill: #bccac3; }
.showme p { display: flex; align-items: center; gap: 4px; height: 28px; padding-left: 1px; color: #111; }
.showme .hint { height: 24px; }
.showme p .pill { width: 48px; }

/* sheet tabs and status */
.sheet-tabs { display: flex; height: 31px; flex: none; background: #e6e6e6; border: 1px solid #c8c8c8; border-width: 1px 0; color: #555; }
.sheet-tabs button { width: 60px; text-align: center; border-right: 1px solid #c8c8c8; }
.sheet-tabs .on { background: #fafafa; }
.sheet-tabs .data-source { width: 131px; display: flex; align-items: center; gap: 6px; padding-left: 10px; }
.sheet-tabs .new { width: 32px; display: flex; align-items: center; justify-content: center; }
.status { display: flex; gap: 24px; height: 20px; flex: none; padding-left: 3px; background: #ebebeb; font-size: 11px; line-height: 20px; color: #111; position: relative; }
.status-right { margin-left: auto; display: flex; padding-right: 6px; }
.status-right i { width: 27px; border-left: 1px solid #c8c8c8; }
.status-right .wide { width: 127px; }
.status-right .mid { width: 47px; }
.nav-buttons, .view-buttons { display: flex; align-items: center; border-left: 1px solid #c8c8c8; }
.nav-buttons { gap: 8px; width: 71px; padding-left: 7px; }
.view-buttons { gap: 10px; padding-left: 8px; }
.watermark { position: absolute; right: 6px; top: -1px; font: 17px/20px "Liberation Mono", monospace; color: #c9c9c6; pointer-events: none; }
.taskbar { display: flex; justify-content: space-between; height: 8px; flex: none; overflow: hidden; background: #000308; padding: 0 75px 0 933px; color: #fff; }
.running { width: 48px; background: #35383c; }
.taskbar time { line-height: 18px; font-size: 12px; }
```
FILE: chart.js
```js
const AXIS_MAX = 14;
const data = [
  ["河南", 5.41, 5.55],
  ["江苏", 9.64, 13.48],
  ["辽宁", 1.25, 1.18],
  ["山东", 7.77, 8.65],
  ["山西", 0.85, 0.85],
  ["浙江", 7.07, 7.39],
  ["重庆", 0.06, 0.06],
];

const ticks = document.getElementById("ticks");
for (let v = AXIS_MAX; v > 0; v--) {
  const zero = v === 1 ? "<span>0M</span>" : "";
  ticks.insertAdjacentHTML("beforeend", `<div class="tick"><span>${v}M</span>${zero}</div>`);
}

const panes = document.getElementById("panes");
const lines = "<i></i>".repeat(AXIS_MAX);
for (const [name, ...values] of data) {
  const bars = values
    .map((v) => `<div class="bar" style="height:${(v / AXIS_MAX) * 100}%"></div>`)
    .join("");
  panes.insertAdjacentHTML("beforeend", `<div class="pane">
    <div class="pane-name">${name}</div>
    <div class="plot"><div class="lines">${lines}</div><div class="bars">${bars}</div></div>
    <div class="bar-names"><span>同期值</span><span>当期值</span></div>
  </div>`);
}
```
